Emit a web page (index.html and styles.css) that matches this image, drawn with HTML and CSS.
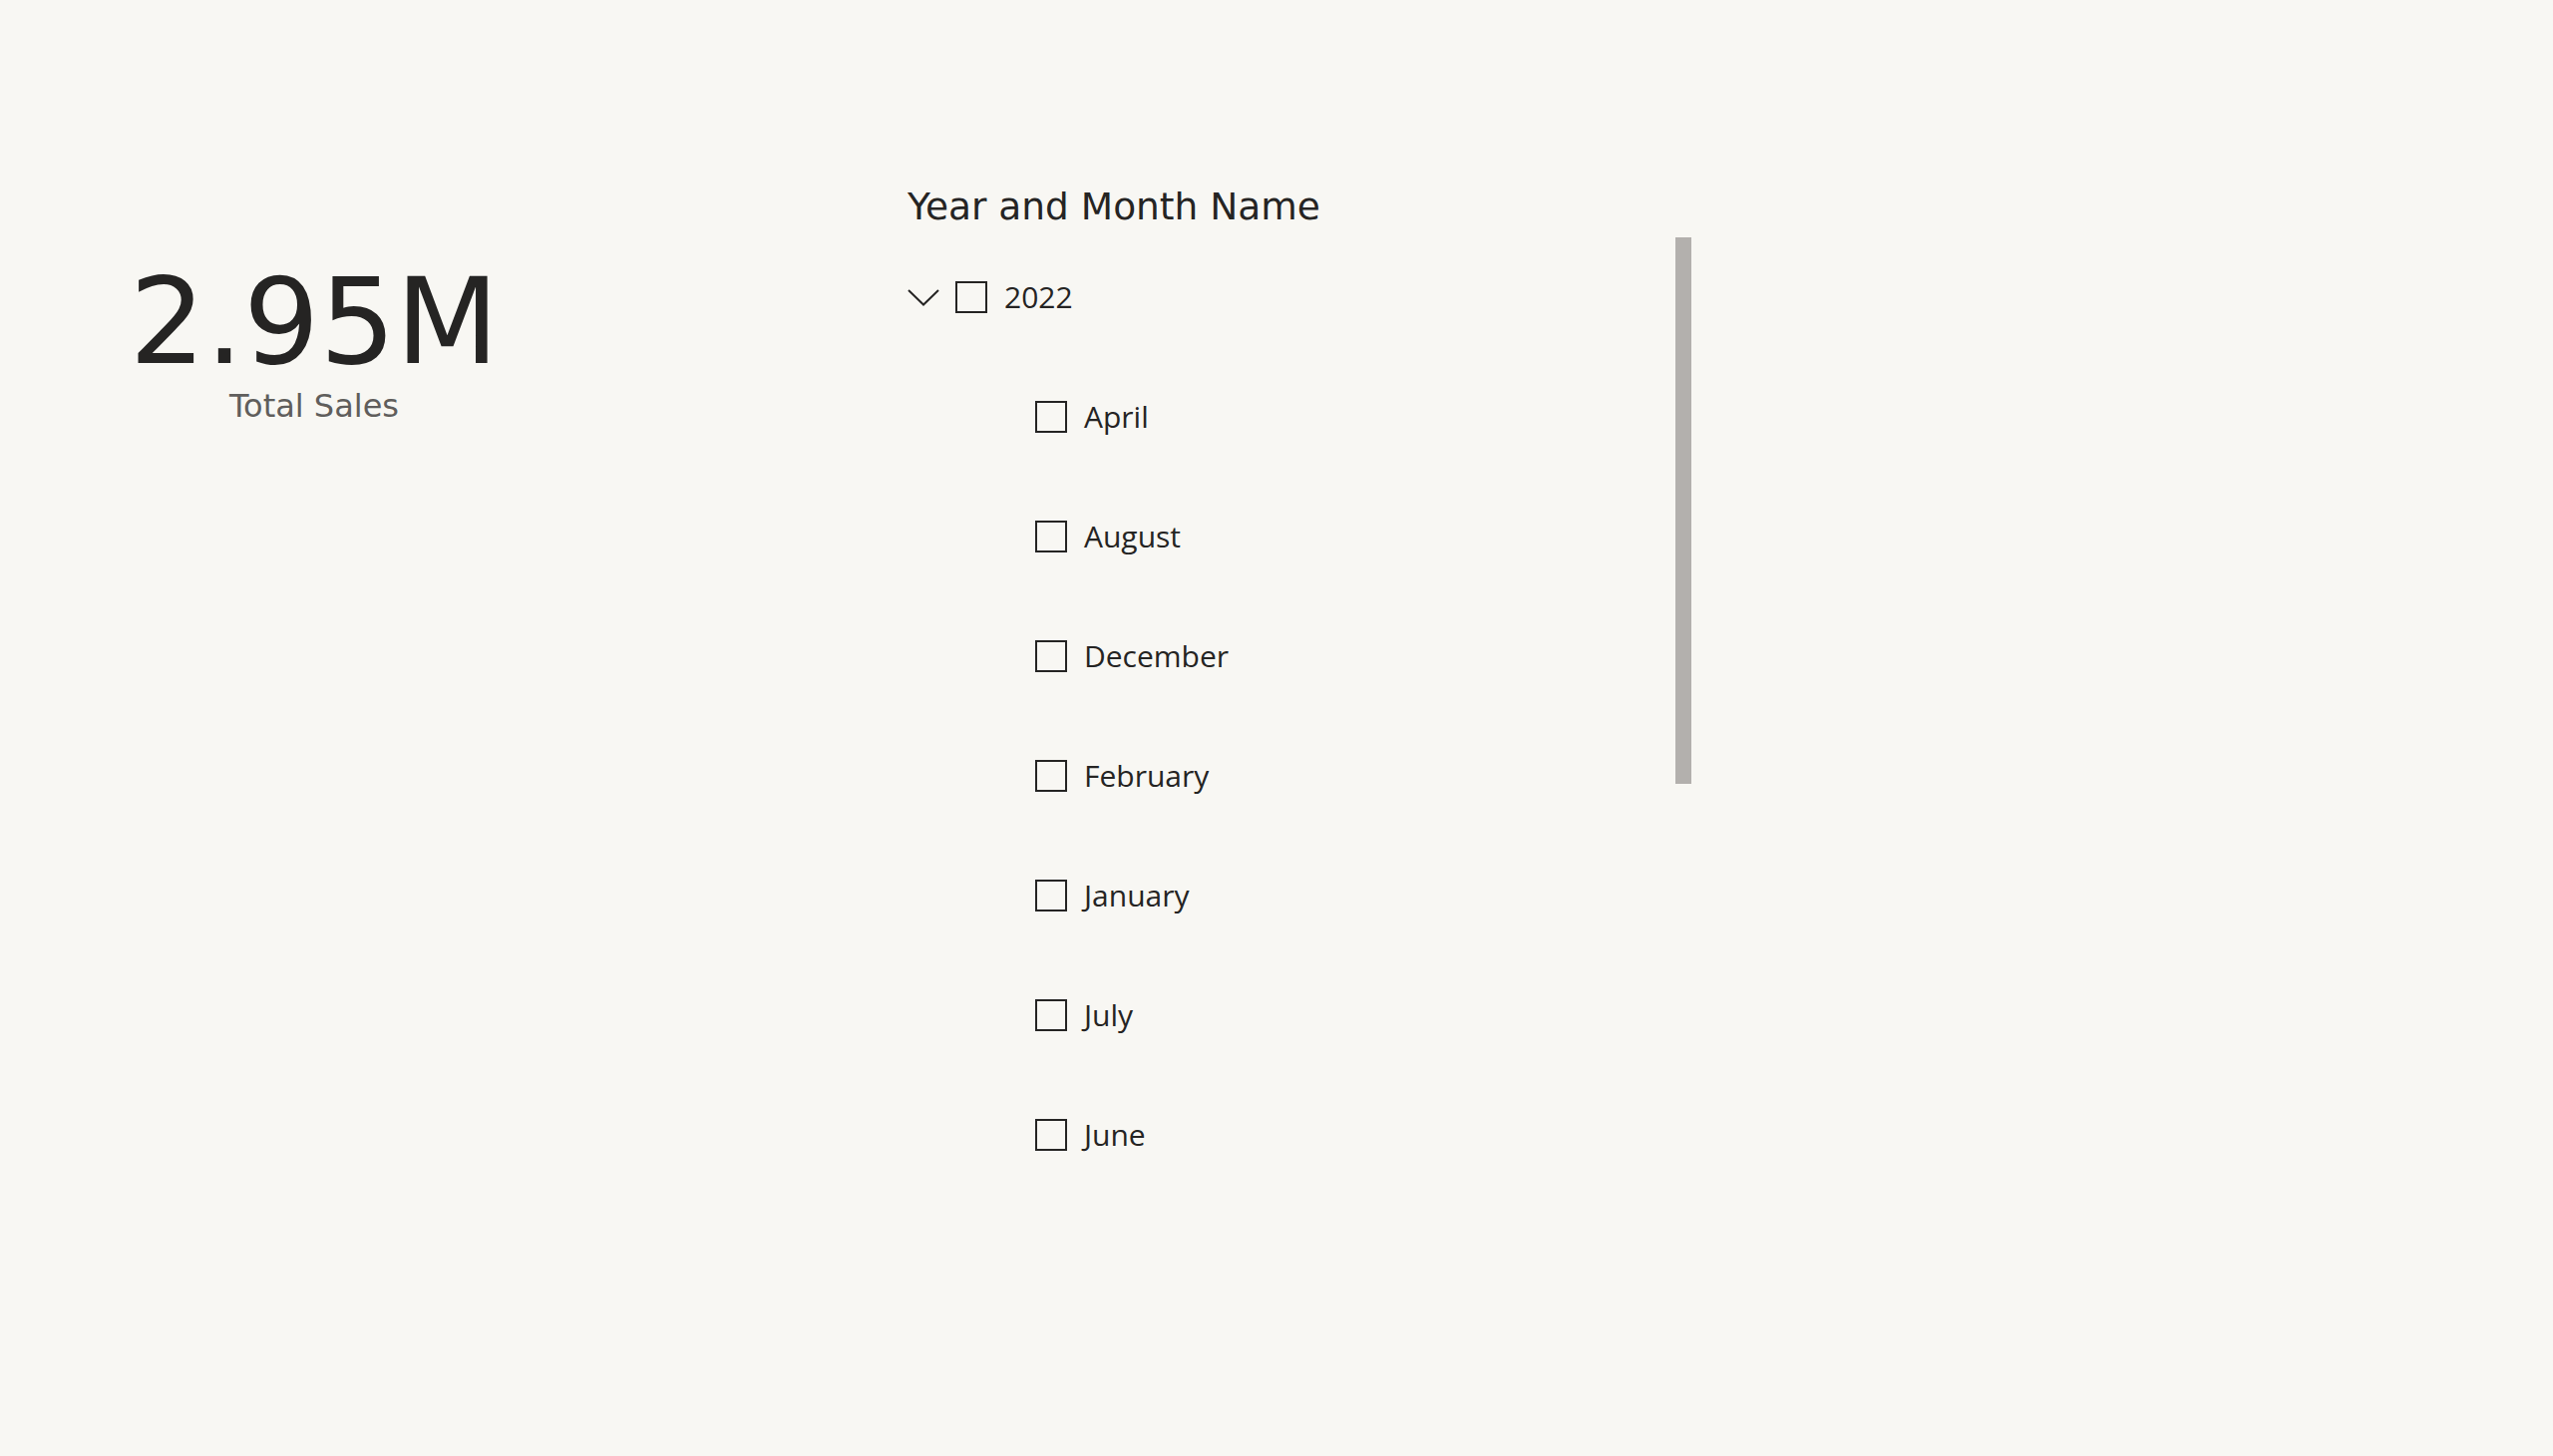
FILE: index.html
```html
<!DOCTYPE html>
<html lang="en">
<head>
<meta charset="utf-8">
<title>Report</title>
<link rel="stylesheet" href="styles.css">
</head>
<body>
<div class="canvas">
  <section class="card">
    <div class="card-value">2.95M</div>
    <div class="card-label">Total Sales</div>
  </section>
  <section class="slicer">
    <h2 class="slicer-title">Year and Month Name</h2>
    <div class="slicer-body">
      <ul class="slicer-list">
        <li class="row row-parent">
          <svg class="chevron" width="32" height="17" viewBox="0 0 32 17"><polyline points="1,1 16,15.5 31,1" fill="none" stroke="#252423" stroke-width="2"/></svg>
          <span class="box"></span>
          <span class="label">2022</span>
        </li>
        <li class="row row-child"><span class="box"></span><span class="label">April</span></li>
        <li class="row row-child"><span class="box"></span><span class="label">August</span></li>
        <li class="row row-child"><span class="box"></span><span class="label">December</span></li>
        <li class="row row-child"><span class="box"></span><span class="label">February</span></li>
        <li class="row row-child"><span class="box"></span><span class="label">January</span></li>
        <li class="row row-child"><span class="box"></span><span class="label">July</span></li>
        <li class="row row-child"><span class="box"></span><span class="label">June</span></li>
      </ul>
      <div class="scrollbar"><div class="thumb"></div></div>
    </div>
  </section>
</div>
</body>
</html>
```
FILE: styles.css
```css
html, body {
  margin: 0;
  padding: 0;
  background: #f8f7f3;
}
body {
  width: 2560px;
  height: 1460px;
  overflow: hidden;
  color: #252423;
  font-family: "DejaVu Sans", sans-serif;
}
.canvas {
  display: flex;
  align-items: flex-start;
}
.card {
  width: 630px;
  padding-top: 258px;
  text-align: center;
}
.card-value {
  font-size: 120px;
  line-height: 130px;
  color: #252423;
}
.card-label {
  font-size: 32px;
  line-height: 38px;
  color: #605e5c;
}
.slicer {
  margin-left: 280px;
  width: 786px;
  padding-top: 183px;
}
.slicer-title {
  margin: 0;
  font-weight: normal;
  font-size: 37.5px;
  line-height: 48px;
  color: #252423;
}
.slicer-body {
  margin-top: 7px;
  display: flex;
  align-items: flex-start;
}
.slicer-list {
  list-style: none;
  margin: 0;
  padding: 0;
  flex: 1;
}
.row {
  height: 120px;
  display: flex;
  align-items: center;
  font-family: "Open Sans", sans-serif;
  font-size: 30px;
  color: #252423;
}
.row-child {
  padding-left: 128px;
}
.chevron {
  display: block;
  margin-right: 16px;
  flex: none;
}
.box {
  width: 32px;
  height: 32px;
  box-sizing: border-box;
  border: 2px solid #252423;
  flex: none;
  margin-right: 17px;
}
.label {
  line-height: 40px;
}
.scrollbar {
  width: 16px;
  flex: none;
}
.thumb {
  height: 548px;
  background: #b3b0ad;
}
```
